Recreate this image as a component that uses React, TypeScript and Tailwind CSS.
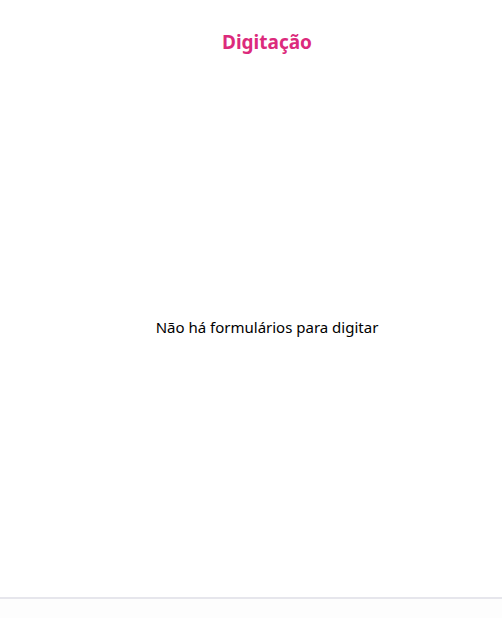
export default function App() {
  return (
    <div
      className="flex h-[618px] w-full flex-col bg-white text-black"
      style={{ fontFamily: '"Noto Sans", "Open Sans", sans-serif' }}
    >
      {/* header */}
      <header className="flex h-[60px] items-center justify-center pl-8 pt-[24px]">
        <h1 className="text-[19px] font-bold text-[#dc2a7c]">Digitação</h1>
      </header>

      <main className="flex flex-1 items-center justify-center pb-[3px] pl-8">
        <p className="text-[15px]">Não há formulários para digitar</p>
      </main>

      <footer className="h-[21px] border-t-2 border-[#e6e6ec] bg-[#fdfdfd]" />
    </div>
  );
}
